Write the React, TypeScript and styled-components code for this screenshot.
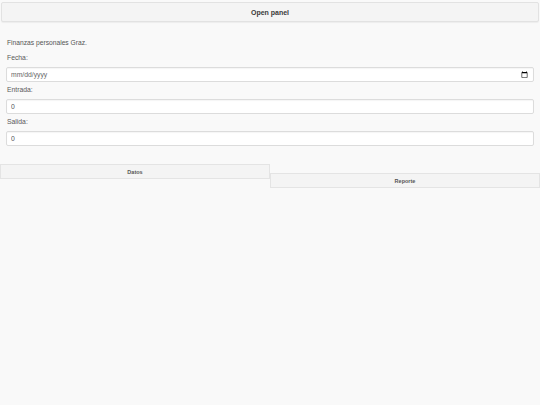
import React, { useState } from 'react';
import styled, { createGlobalStyle } from 'styled-components';

const GlobalStyle = createGlobalStyle`
  html, body {
    margin: 0;
    padding: 0;
    background: #f9f9f9;
    font-family: "Liberation Sans", Arial, Helvetica, sans-serif;
    color: #444;
  }
`;

const Page = styled.div`
  min-height: 405px;
  padding-top: 2px;
  box-sizing: border-box;
`;

const PanelButton = styled.button`
  display: block;
  width: calc(100% - 2px);
  height: 20px;
  margin: 0 1px;
  padding: 0;
  background: #f4f4f4;
  border: 1px solid #e2e2e2;
  border-radius: 2px;
  box-shadow: 0 1px 1px rgba(0, 0, 0, 0.05);
  font-family: inherit;
  font-size: 7px;
  font-weight: bold;
  color: #3a3a3a;
  cursor: pointer;
`;

const Form = styled.div`
  padding: 16px 6px 0 6px;
`;

const Title = styled.p`
  margin: 0 0 6px 1px;
  font-size: 6.7px;
  line-height: 9px;
  color: #555;
`;

const Label = styled.label`
  display: block;
  margin: 3px 0 5px 1px;
  font-size: 6.8px;
  line-height: 9px;
  color: #5a5a5a;
`;

const Input = styled.input`
  display: block;
  width: 100%;
  height: 15px;
  margin: 0;
  padding: 0 4px;
  box-sizing: border-box;
  background: #fff;
  border: 1px solid #dcdcdc;
  border-radius: 2px;
  box-shadow: inset 0 1px 1px rgba(0, 0, 0, 0.04);
  font-family: inherit;
  font-size: 6.8px;
  color: #555;
  outline: none;

  &::-webkit-datetime-edit-text,
  &::-webkit-datetime-edit-month-field,
  &::-webkit-datetime-edit-day-field,
  &::-webkit-datetime-edit-year-field {
    padding: 0;
    margin: 0;
    color: #666;
  }

  &::-webkit-calendar-picker-indicator {
    width: 7px;
    height: 7px;
    padding: 0;
    margin: 0 1px 0 0;
  }
`;

const Tabs = styled.div`
  display: flex;
  align-items: flex-start;
  margin-top: 18px;
`;

const Tab = styled.button<{ $offset?: number }>`
  flex: 1;
  height: 15px;
  margin: ${(p) => p.$offset || 0}px 0 0;
  padding: 0;
  background: #f4f4f4;
  border: 1px solid #e4e4e4;
  font-family: inherit;
  font-size: 5.5px;
  font-weight: bold;
  color: #555;
  cursor: pointer;
`;

const App: React.FC = () => {
  const [fecha, setFecha] = useState('');
  const [entrada, setEntrada] = useState('0');
  const [salida, setSalida] = useState('0');

  return (
    <>
      <GlobalStyle />
      <Page>
        <PanelButton>Open panel</PanelButton>
        <Form>
          <Title>Finanzas personales Graz.</Title>
          <Label htmlFor="fecha">Fecha:</Label>
          <Input id="fecha" type="date" value={fecha} onChange={(e) => setFecha(e.target.value)} />
          <Label htmlFor="entrada">Entrada:</Label>
          <Input id="entrada" type="number" value={entrada} onChange={(e) => setEntrada(e.target.value)} />
          <Label htmlFor="salida">Salida:</Label>
          <Input id="salida" type="number" value={salida} onChange={(e) => setSalida(e.target.value)} />
        </Form>
        <Tabs>
          <Tab>Datos</Tab>
          <Tab $offset={9}>Reporte</Tab>
        </Tabs>
      </Page>
    </>
  );
};

export default App;
